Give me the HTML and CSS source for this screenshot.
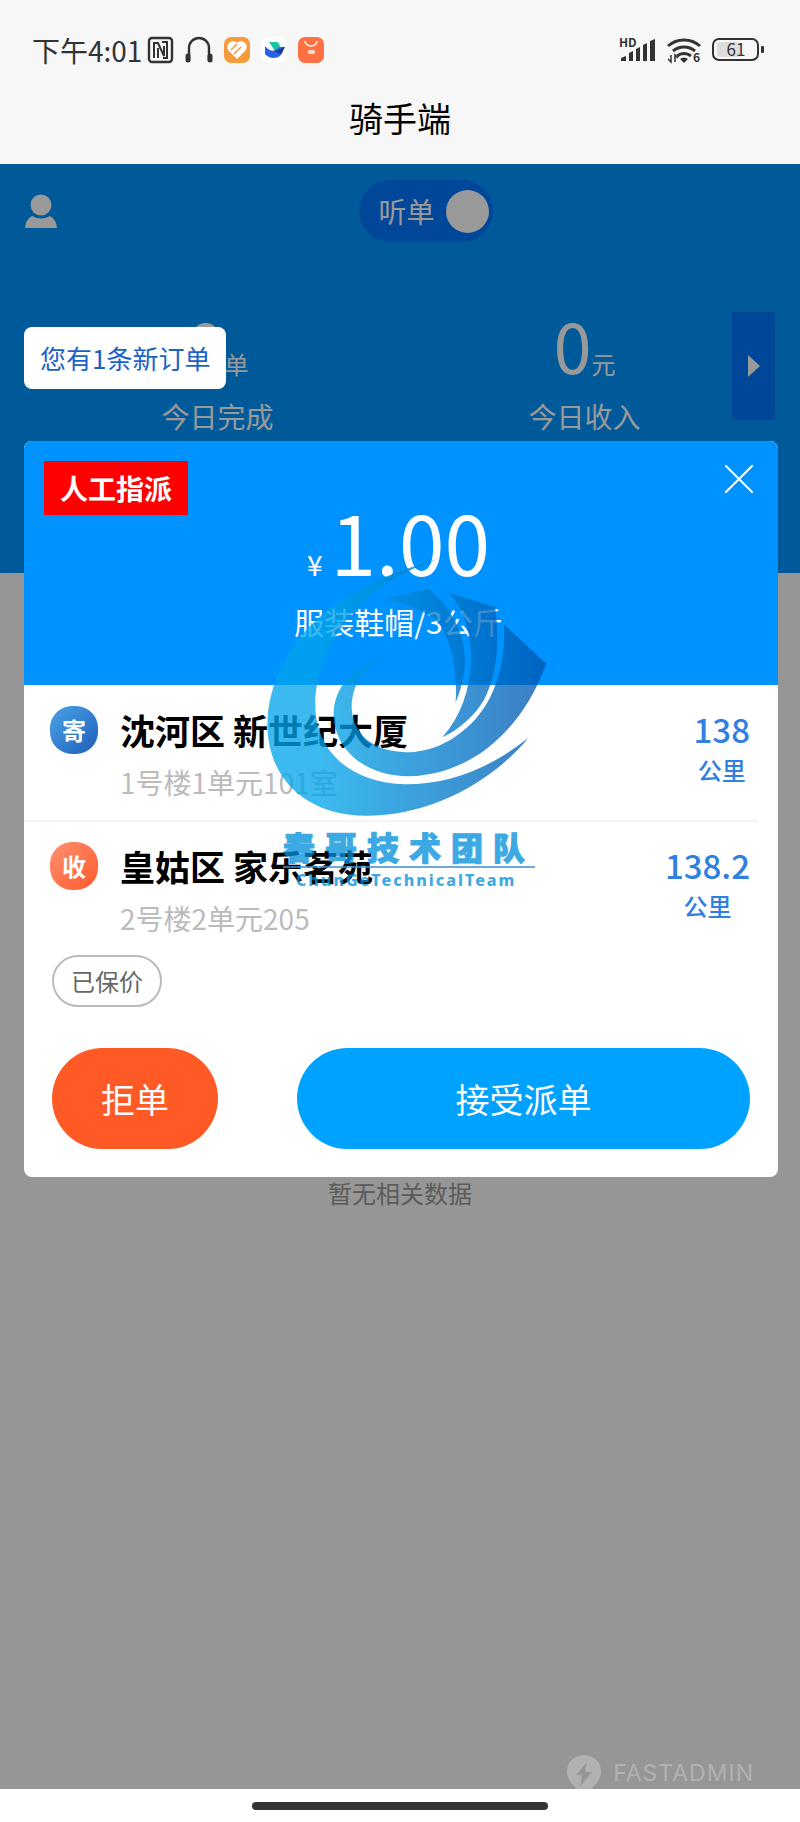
FILE: index.html
```html
<!DOCTYPE html>
<html lang="zh-CN">
<head>
    <meta charset="UTF-8">
    <meta name="viewport" content="width=device-width, initial-scale=1.0">
    <title>骑手端</title>
    <link rel="stylesheet" href="styles.css">
</head>
<body>
    <header class="header">
        <div class="status-bar">
            <span class="status-time">下午4:01</span>
            <svg class="status-icon" width="26" height="26" viewBox="0 0 26 26" fill="none" stroke="#333">
                <rect x="1" y="1" width="23" height="24" rx="3" stroke-width="2.4"/>
                <path d="M6 21V6h4l6 13V9M10 21V11M14 5h5v16h-4" stroke-width="2"/>
            </svg>
            <svg class="status-icon" width="28" height="28" viewBox="0 0 28 28" fill="none" stroke="#333">
                <path d="M4 25V12a10 10 0 0 1 20 0v13" stroke-width="2.4"/>
                <path d="M3 20v4M25 20v4" stroke-width="5" stroke-linecap="round"/>
            </svg>
            <svg class="status-icon" width="26" height="26" viewBox="0 0 26 26">
                <rect width="26" height="26" rx="7" fill="#f59b3c"/>
                <path d="M13 21L5 13a4.6 4.6 0 0 1 8-6 4.6 4.6 0 0 1 8 6z" fill="#fff" stroke="#fff" stroke-width="1.5" stroke-linejoin="round"/>
                <path d="M7 13l6-6M10 17l7-7" stroke="#f59b3c" stroke-width="1.5"/>
            </svg>
            <svg class="status-icon" width="26" height="26" viewBox="0 0 26 26">
                <rect width="26" height="26" rx="7" fill="#fff"/>
                <path d="M8 5h8q3 1 3 6l-5 3z" fill="#16c6a5"/>
                <path d="M4 9c4 5 9 6 12 3q3-3 8-2c-2 2-2 11-11 11-6 0-9-4-9-4z" fill="#2b60e6"/>
                <path d="M13 14q5-1 11-4l-4 7z" fill="#183a8f"/>
            </svg>
            <svg class="status-icon" width="26" height="26" viewBox="0 0 26 26">
                <rect width="26" height="26" rx="7" fill="#ff7043"/>
                <path d="M7 4a6 5 0 0 0 12 0" fill="none" stroke="#fff" stroke-width="1.5"/>
                <rect x="10" y="13" width="7" height="4" rx="1" fill="#ffd5c4"/>
            </svg>
            <svg class="status-icon status-signal" width="38" height="26" viewBox="0 0 38 26" fill="#333">
                <text x="1" y="10" font-size="12" font-weight="700">HD</text>
                <path d="M3 24v-3l5-2v5zM11 24v-8l4-2v10zM18 24V12l4-2v14zM25 24V8l4-2v18zM32 24V4l5-2v22z"/>
            </svg>
            <svg class="status-icon" width="34" height="28" viewBox="0 0 34 28" fill="none" stroke="#333" stroke-width="3">
                <path d="M1 10a24 24 0 0 1 32 0M6 15a17 17 0 0 1 22 0M10 20a11 11 0 0 1 14 0"/>
                <path d="M13 23q4-3 8 0l-4 4z" fill="#333" stroke="none"/>
                <path d="M4 19v7l-3-3M8 26v-7l3 3" stroke-width="1.5"/>
                <text x="26" y="26" font-size="12" font-weight="700" fill="#333" stroke="none">6</text>
            </svg>
            <svg class="status-icon" width="52" height="24" viewBox="0 0 52 24">
                <rect x="1" y="1" width="45" height="21" rx="6" fill="none" stroke="#333" stroke-width="2"/>
                <rect x="5" y="4" width="23" height="15" rx="3" fill="#ddd"/>
                <rect x="49" y="8" width="3" height="7" rx="1" fill="#333"/>
                <text x="24" y="18" font-size="17" text-anchor="middle" fill="#333">61</text>
            </svg>
        </div>
        <h1 class="page-title">骑手端</h1>
    </header>

    <main class="content">
        <section class="hero">
            <div class="hero-top">
                <a href="#" class="user-link" aria-label="个人中心">
                    <svg width="32" height="34" viewBox="0 0 32 34" fill="#fff">
                        <circle cx="16" cy="11" r="10.5"/>
                        <path d="M0 34q1-9 7-12 9 5 18 0 6 3 7 12z"/>
                    </svg>
                </a>
                <label class="listen-switch">
                    <span>听单</span>
                    <input type="checkbox" class="listen-knob" checked>
                </label>
            </div>
            <div class="stats">
                <div class="stat">
                    <div class="stat-value">0<small>单</small></div>
                    <div class="stat-label">今日完成</div>
                </div>
                <div class="stat">
                    <div class="stat-value">0<small>元</small></div>
                    <div class="stat-label">今日收入</div>
                </div>
                <button type="button" class="stats-more" aria-label="更多">
                    <svg width="12" height="22" viewBox="0 0 12 22"><path d="M0 0l12 11L0 22z" fill="#fff"/></svg>
                </button>
            </div>
        </section>
        <p class="empty">暂无相关数据</p>

        <!-- 新订单弹窗 -->
        <div class="overlay">
            <div class="toast">您有1条新订单</div>
            <div class="modal" role="dialog" aria-label="新订单">
                <div class="modal-head">
                    <div class="modal-top">
                        <span class="tag">人工指派</span>
                        <button type="button" class="close" aria-label="关闭">
                            <svg width="28" height="28" viewBox="0 0 28 28" stroke="#fff" stroke-width="2"><path d="M0 0l28 28M28 0L0 28"/></svg>
                        </button>
                    </div>
                    <div class="price"><span class="currency">¥</span>1.00</div>
                    <div class="goods">服装鞋帽/3公斤</div>
                </div>

                <div class="address">
                    <span class="address-icon from">寄</span>
                    <div class="address-text">
                        <h2>沈河区 新世纪大厦</h2>
                        <p>1号楼1单元101室</p>
                    </div>
                    <div class="distance"><b>138</b><span>公里</span></div>
                </div>
                <div class="address">
                    <span class="address-icon to">收</span>
                    <div class="address-text">
                        <h2>皇姑区 家乐茗苑</h2>
                        <p>2号楼2单元205</p>
                    </div>
                    <div class="distance"><b>138.2</b><span>公里</span></div>
                </div>

                <span class="badge">已保价</span>

                <div class="actions">
                    <button type="button" class="btn btn-reject">拒单</button>
                    <button type="button" class="btn btn-accept">接受派单</button>
                </div>

                <div class="team-mark">
                    <svg class="team-logo" viewBox="84 -5 840 775">
                        <defs>
                            <linearGradient id="wave" gradientUnits="userSpaceOnUse" x1="250" y1="0" x2="920" y2="0">
                                <stop offset="0" stop-color="#00a4ea"/>
                                <stop offset="1" stop-color="#0055b0"/>
                            </linearGradient>
                        </defs>
                        <g fill="url(#wave)">
                            <path d="M600-3C350 65 130 190 88 450C65 640 190 768 380 768C580 768 760 665 868 535C760 620 640 674 500 674C330 670 228 570 229 435C230 270 350 115 480 50Q530 20 600-3z"/>
                            <path d="M440 293C340 320 284 385 284 465C286 570 380 650 510 650C700 645 850 510 922 312L795 195C800 310 770 410 710 478C640 552 570 578 500 578C400 575 338 520 338 440C340 370 380 318 440 293z"/>
                            <path d="M630 100L768 142C784 250 772 350 735 420C710 465 660 510 610 533C665 470 694 390 696 300C696 220 675 150 630 100z"/>
                            <path d="M430 120L570 87C640 150 678 220 678 310Q675 370 650 428C656 340 640 250 600 190Q540 135 430 120z"/>
                        </g>
                    </svg>
                    <div class="team-name">春哥技术团队</div>
                    <div class="team-latin">ChunGeTechnicalTeam</div>
                </div>
            </div>
        </div>

        <div class="powered">
            <svg width="34" height="36" viewBox="0 0 34 36">
                <path d="M17 0q17 2 17 17 0 7-7 14l-5 5H12l-5-5Q0 24 0 17 0 2 17 0z" fill="#b1b1b1"/>
                <path d="M20 7L9 20h6l-2 12 12-15h-7z" fill="#969696"/>
            </svg>
            <span>FASTADMIN</span>
        </div>
    </main>

    <footer class="home-bar"><span></span></footer>
</body>
</html>
```
FILE: styles.css
```css
* {
    box-sizing: border-box;
}
body {
    display: flex;
    flex-direction: column;
    min-height: 100vh;
    margin: 0;
    background: #fff;
    font-family: "Noto Sans CJK SC", sans-serif;
}
h1, h2, p {
    margin: 0;
    font-weight: 400;
}
button {
    padding: 0;
    border: none;
    font-family: inherit;
    cursor: pointer;
}
svg {
    display: block;
}

/* header */
.header {
    height: 164px;
    padding-top: 30px;
    background: #f7f7f7;
}
.status-bar {
    display: flex;
    align-items: center;
    gap: 11px;
    height: 40px;
    padding: 0 36px 0 32px;
}
.status-time {
    margin-right: -5px;
    font-size: 28px;
    color: #333;
}
.status-icon {
    flex: none;
    overflow: visible;
}
.status-signal {
    margin-left: auto;
}
.page-title {
    margin-top: 23px;
    font-size: 34px;
    line-height: 50px;
    text-align: center;
    color: #000;
}

/* content */
.content {
    position: relative;
    flex: 1;
    overflow: hidden;
    background: #fafafa;
}
.hero {
    height: 409px;
    padding-top: 16px;
    background: #0096ff;
    color: #fff;
}
.hero-top {
    display: grid;
    grid-template-columns: 1fr auto 1fr;
    align-items: center;
    padding-left: 25px;
}
.user-link {
    width: 32px;
}
.listen-switch {
    display: flex;
    align-items: center;
    justify-content: space-between;
    width: 134px;
    height: 62px;
    margin-right: -26px;
    padding: 0 4px 0 20px;
    border-radius: 31px;
    background: #0075ff;
    font-size: 28px;
}
.listen-knob {
    appearance: none;
    width: 43px;
    height: 43px;
    margin: 0;
    border-radius: 50%;
    background: #fff;
}
.stats {
    position: relative;
    display: grid;
    grid-template-columns: 1fr 1fr;
    margin-top: 70px;
    padding: 0 32px 0 34px;
    text-align: center;
}
.stat-value {
    font-size: 68px;
    line-height: 66px;
}
.stat-value small {
    font-size: 24px;
    line-height: 24px;
}
.stat-label {
    margin-top: 16px;
    font-size: 28px;
    line-height: 44px;
}
.stats-more {
    position: absolute;
    top: 0;
    right: 25px;
    display: flex;
    align-items: center;
    justify-content: center;
    width: 43px;
    height: 108px;
    background: #0075ff;
}
.empty {
    padding-top: 602px;
    font-size: 24px;
    line-height: 36px;
    text-align: center;
    color: #999;
}

/* overlay */
.overlay {
    position: absolute;
    inset: 0;
    display: flex;
    flex-direction: column;
    align-items: flex-start;
    gap: 52px;
    padding: 163px 22px 0 24px;
    background: rgba(0, 0, 0, 0.4);
}
.toast {
    padding: 0 16px;
    border-radius: 8px;
    background: #fff;
    font-size: 26px;
    line-height: 62px;
    color: #1a62c8;
}
.modal {
    position: relative;
    width: 100%;
    padding-bottom: 28px;
    border-radius: 8px;
    background: #fff;
}
.modal-head {
    height: 244px;
    padding: 20px 25px 0 20px;
    border-radius: 8px 8px 0 0;
    background: #0093ff;
    text-align: center;
    color: #fff;
}
.modal-top {
    display: flex;
    justify-content: space-between;
    align-items: flex-start;
    height: 30px;
}
.tag {
    padding: 0 16px;
    background: #fe0000;
    font-size: 28px;
    font-weight: 700;
    line-height: 54px;
}
.close {
    margin-top: 4px;
    background: none;
}
.price {
    font-size: 82px;
    line-height: 100px;
}
.currency {
    margin-right: 8px;
    font-size: 28px;
    line-height: 28px;
}
.goods {
    font-size: 30px;
    line-height: 60px;
}

/* addresses */
.address {
    display: flex;
    margin-right: 20px;
    padding: 21px 8px 18px 26px;
}
.address + .address {
    padding: 20px 8px 17px 26px;
    border-top: 2px solid #f3f3f3;
}
.address-icon {
    width: 48px;
    height: 48px;
    margin-right: 22px;
    border-radius: 22px;
    font-size: 24px;
    font-weight: 700;
    line-height: 48px;
    text-align: center;
    color: #fff;
}
.from {
    background: linear-gradient(135deg, #4aa3e8, #1e5fb8);
}
.to {
    background: linear-gradient(135deg, #ff9070, #ff5a2c);
}
.address-text {
    flex: 1;
}
.address-text h2 {
    font-size: 35px;
    font-weight: 700;
    line-height: 48px;
    color: #000;
}
.address-text p {
    margin-top: 8px;
    font-size: 28px;
    line-height: 40px;
    color: #bbb;
}
.distance {
    display: flex;
    flex-direction: column;
    align-items: center;
    font-weight: 500;
    color: #2f80e0;
}
.distance b {
    font-size: 33px;
    font-weight: 500;
    line-height: 46px;
}
.distance span {
    font-size: 24px;
    line-height: 36px;
}
.badge {
    display: inline-block;
    margin-left: 28px;
    padding: 0 17px;
    border: 2px solid #bbb;
    border-radius: 26px;
    font-size: 24px;
    line-height: 48px;
    color: #666;
}
.actions {
    display: flex;
    gap: 79px;
    margin-top: 41px;
    padding: 0 28px;
}
.btn {
    height: 101px;
    border-radius: 51px;
    font-size: 34px;
    color: #fff;
}
.btn-reject {
    width: 166px;
    background: #ff5a26;
}
.btn-accept {
    flex: 1;
    background: #00a2ff;
}

/* watermarks */
.team-mark {
    position: absolute;
    top: 117px;
    left: calc(50% - 134px);
    width: 280px;
    opacity: 0.76;
    color: #008fdb;
    pointer-events: none;
}
.team-logo {
    width: 100%;
}
.team-name {
    margin: 10px 12px 0 16px;
    border-bottom: 2px solid #3f8fd8;
    font-size: 32px;
    font-weight: 900;
    line-height: 40px;
    letter-spacing: 10px;
    white-space: nowrap;
    -webkit-text-stroke: 1px #008fdb;
}
.team-latin {
    padding-left: 29px;
    font-family: "Noto Sans", sans-serif;
    font-size: 16px;
    font-weight: 800;
    line-height: 24px;
    letter-spacing: 2px;
}
.powered {
    position: absolute;
    right: 46px;
    bottom: -2px;
    display: flex;
    align-items: center;
    gap: 12px;
    font-family: Inter, sans-serif;
    font-size: 23px;
    letter-spacing: 1px;
    color: #b1b1b1;
}

.home-bar {
    display: flex;
    justify-content: center;
    height: 33px;
    padding-top: 13px;
}
.home-bar span {
    width: 296px;
    height: 8px;
    border-radius: 4px;
    background: #333;
}
```
